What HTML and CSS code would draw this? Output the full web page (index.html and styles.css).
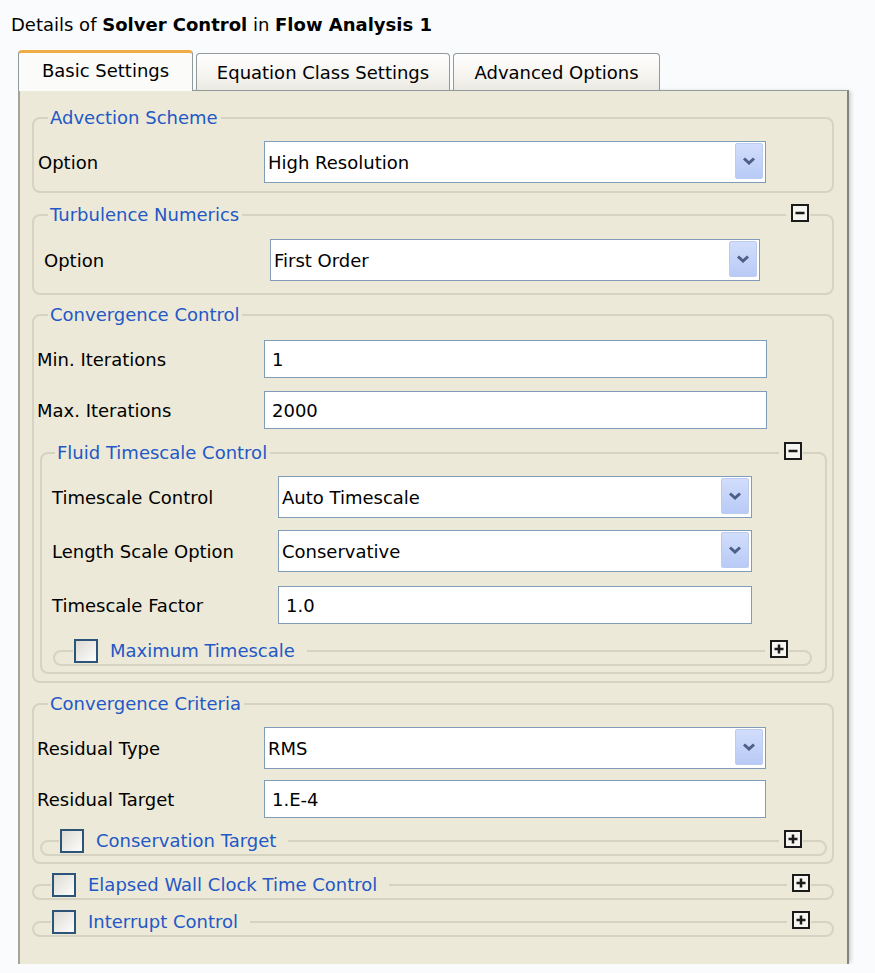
FILE: index.html
```html
<!DOCTYPE html>
<html>
<head>
<meta charset="utf-8">
<link rel="stylesheet" href="styles.css">
</head>
<body>
<div class="title">Details of <b>Solver Control</b> in <b>Flow Analysis 1</b></div>
<div class="tabs">
  <div class="tab active">Basic Settings</div>
  <div class="tab t2">Equation Class Settings</div>
  <div class="tab t3">Advanced Options</div>
</div>
<div class="panel">
  <section class="group g1">
    <div class="group-head"><span class="group-title">Advection Scheme</span></div>
    <div class="group-body">
      <div class="row"><span class="label">Option</span>
        <div class="combo"><span class="value">High Resolution</span><span class="drop"><svg width="14" height="10" viewBox="0 0 14 10"><path d="M2 2.5l5 4.5 5-4.5" fill="none" stroke="#4c5f86" stroke-width="3"/></svg></span></div>
      </div>
    </div>
  </section>

  <section class="group g2">
    <div class="group-head"><span class="group-title">Turbulence Numerics</span>
      <span class="toggle"><svg width="18" height="18" viewBox="0 0 18 18"><rect x="1" y="1" width="16" height="16" fill="#f6f5f0" stroke="#1b1b1b" stroke-width="2"/><path d="M4.5 9h9" stroke="#1b1b1b" stroke-width="2.5"/></svg></span>
    </div>
    <div class="group-body">
      <div class="row"><span class="label">Option</span>
        <div class="combo"><span class="value">First Order</span><span class="drop"><svg width="14" height="10" viewBox="0 0 14 10"><path d="M2 2.5l5 4.5 5-4.5" fill="none" stroke="#4c5f86" stroke-width="3"/></svg></span></div>
      </div>
    </div>
  </section>

  <section class="group g3">
    <div class="group-head"><span class="group-title">Convergence Control</span></div>
    <div class="group-body">
      <div class="row"><span class="label">Min. Iterations</span><div class="input">1</div></div>
      <div class="row"><span class="label">Max. Iterations</span><div class="input">2000</div></div>

      <section class="group fluid">
        <div class="group-head"><span class="group-title">Fluid Timescale Control</span>
          <span class="toggle"><svg width="18" height="18" viewBox="0 0 18 18"><rect x="1" y="1" width="16" height="16" fill="#f6f5f0" stroke="#1b1b1b" stroke-width="2"/><path d="M4.5 9h9" stroke="#1b1b1b" stroke-width="2.5"/></svg></span>
        </div>
        <div class="group-body">
          <div class="row"><span class="label">Timescale Control</span>
            <div class="combo"><span class="value">Auto Timescale</span><span class="drop"><svg width="14" height="10" viewBox="0 0 14 10"><path d="M2 2.5l5 4.5 5-4.5" fill="none" stroke="#4c5f86" stroke-width="3"/></svg></span></div>
          </div>
          <div class="row"><span class="label">Length Scale Option</span>
            <div class="combo"><span class="value">Conservative</span><span class="drop"><svg width="14" height="10" viewBox="0 0 14 10"><path d="M2 2.5l5 4.5 5-4.5" fill="none" stroke="#4c5f86" stroke-width="3"/></svg></span></div>
          </div>
          <div class="row gap14"><span class="label">Timescale Factor</span><div class="input">1.0</div></div>

          <section class="group collapsed maxts">
            <div class="group-head"><span class="group-title"><span class="check"></span>Maximum Timescale</span>
              <span class="toggle"><svg width="18" height="18" viewBox="0 0 18 18"><rect x="1" y="1" width="16" height="16" fill="#f6f5f0" stroke="#1b1b1b" stroke-width="2"/><path d="M4.5 9h9M9 4.5v9" stroke="#1b1b1b" stroke-width="2.5"/></svg></span>
            </div>
          </section>
        </div>
      </section>
    </div>
  </section>

  <section class="group g4">
    <div class="group-head"><span class="group-title">Convergence Criteria</span></div>
    <div class="group-body">
      <div class="row"><span class="label">Residual Type</span>
        <div class="combo"><span class="value">RMS</span><span class="drop"><svg width="14" height="10" viewBox="0 0 14 10"><path d="M2 2.5l5 4.5 5-4.5" fill="none" stroke="#4c5f86" stroke-width="3"/></svg></span></div>
      </div>
      <div class="row gap11"><span class="label">Residual Target</span><div class="input">1.E-4</div></div>

      <section class="group collapsed cons">
        <div class="group-head"><span class="group-title"><span class="check"></span>Conservation Target</span>
          <span class="toggle"><svg width="18" height="18" viewBox="0 0 18 18"><rect x="1" y="1" width="16" height="16" fill="#f6f5f0" stroke="#1b1b1b" stroke-width="2"/><path d="M4.5 9h9M9 4.5v9" stroke="#1b1b1b" stroke-width="2.5"/></svg></span>
        </div>
      </section>
    </div>
  </section>

  <section class="group collapsed g5">
    <div class="group-head"><span class="group-title"><span class="check"></span>Elapsed Wall Clock Time Control</span>
      <span class="toggle"><svg width="18" height="18" viewBox="0 0 18 18"><rect x="1" y="1" width="16" height="16" fill="#f6f5f0" stroke="#1b1b1b" stroke-width="2"/><path d="M4.5 9h9M9 4.5v9" stroke="#1b1b1b" stroke-width="2.5"/></svg></span>
    </div>
  </section>

  <section class="group collapsed g6">
    <div class="group-head"><span class="group-title"><span class="check"></span>Interrupt Control</span>
      <span class="toggle"><svg width="18" height="18" viewBox="0 0 18 18"><rect x="1" y="1" width="16" height="16" fill="#f6f5f0" stroke="#1b1b1b" stroke-width="2"/><path d="M4.5 9h9M9 4.5v9" stroke="#1b1b1b" stroke-width="2.5"/></svg></span>
    </div>
  </section>
</div>
</body>
</html>
```
FILE: styles.css
```css
* { box-sizing: border-box; }

body {
  margin: 0;
  background: #fafbfc;
  font-family: "DejaVu Sans", "Noto Sans", sans-serif;
  font-size: 18px;
  color: #000;
}

.title {
  margin: 14px 0 0 11px;
  line-height: 22px;
  white-space: nowrap;
}

.title b { font-weight: bold; }

.tabs {
  display: flex;
  align-items: flex-end;
  gap: 3px;
  height: 40px;
  margin: 14px 0 0 18px;
}

.tab {
  height: 37px;
  border: 1px solid #919b9c;
  border-bottom: none;
  border-radius: 4px 4px 0 0;
  background: linear-gradient(#ffffff, #f5f4ef 60%, #e9e8e1);
  display: flex;
  align-items: center;
  justify-content: center;
  padding-top: 2px;
  line-height: 22px;
  white-space: nowrap;
}

.tab.active {
  width: 175px;
  height: 41px;
  margin-bottom: -1px;
  border-top: 3px solid #f0ad45;
  background: #fbfbf9;
  padding-top: 0;
  padding-bottom: 3px;
  position: relative;
  z-index: 1;
}

.tab.t2 { width: 254px; }
.tab.t3 { width: 207px; }

.panel {
  width: 831px;
  margin-left: 18px;
  border-top: 1px solid #919b9c;
  border-left: 2px solid #a4a39c;
  border-right: 2px solid #85857f;
  background: #ece9d8;
  padding: 0 13px 27px 12px;
  box-shadow: 3px 0 4px -1px rgba(0, 0, 0, 0.18);
}

.group {
  border: 2px solid #d6d3c2;
  border-radius: 8px;
}

.group-head {
  display: flex;
  align-items: center;
  height: 22px;
  margin-top: -12px;
  padding: 0 22px 0 14px;
}

.group-title {
  display: flex;
  align-items: center;
  background: #ece9d8;
  color: #2358c6;
  line-height: 22px;
  padding: 0 3px 0 2px;
  white-space: nowrap;
}

.toggle {
  margin-left: auto;
  margin-bottom: 4px;
  padding: 0 1px 0 5px;
  background: #ece9d8;
  display: flex;
}

.toggle svg { display: block; }

.group-body { display: flex; flex-direction: column; }

.row {
  display: grid;
  grid-template-columns: 226px 1fr;
  align-items: center;
  line-height: 22px;
}

.row + .row { margin-top: 13px; }
.row.gap14 { margin-top: 14px; }
.row.gap11 { margin-top: 11px; }

.label { white-space: nowrap; padding-top: 2px; }

.combo {
  height: 42px;
  border: 1px solid #7f9db9;
  background: #fff;
  display: flex;
  align-items: center;
  padding: 1px 2px 0 3px;
}

.combo .value { flex: 1; }

.drop {
  width: 28px;
  height: 36px;
  margin-bottom: 3px;
  border: 1px solid #bccbef;
  border-radius: 2px;
  background: linear-gradient(#d1ddfb, #b8caf6);
  display: flex;
  align-items: center;
  justify-content: center;
}

.drop svg { display: block; }

.input {
  height: 38px;
  border: 1px solid #7f9db9;
  background: #fff;
  display: flex;
  align-items: center;
  padding: 1px 0 0 7px;
}

/* group specifics */
.g1 { margin-top: 26px; }
.g1 .group-body { padding: 12px 0 8px; }
.g1 .row { padding: 0 66px 0 4px; }

.g2 { margin-top: 21px; }
.g2 .group-body { padding: 13px 0 12px; }
.g2 .row { padding: 0 72px 0 10px; }

.g3 { margin-top: 19px; }
.g3 .group-body { padding: 14px 0 7px; }
.g3 > .group-body > .row { padding: 0 65px 0 3px; grid-template-columns: 227px 1fr; }

.fluid { margin: 23px 5px 0 6px; }
.fluid .group-head { padding-left: 13px; }
.fluid > .group-body { padding: 12px 0 6px; }
.fluid .row { padding: 0 73px 0 10px; }
.fluid .row + .row { margin-top: 12px; }
.fluid .row.gap14 { margin-top: 14px; }

.g4 { margin-top: 20px; }
.g4 > .group-body { padding: 12px 0 6px; }
.g4 .row { padding: 0 66px 0 3px; grid-template-columns: 227px 1fr; }

.collapsed {
  border-radius: 9px;
  padding-bottom: 1px;
}

.collapsed .group-head {
  height: 24px;
  margin-top: -13px;
  padding: 0 21px 0 17px;
}

.collapsed .group-title {
  gap: 12px;
  padding: 0 12px 0 1px;
}

.check {
  width: 24px;
  height: 24px;
  border: 2px solid #2c5378;
  background: linear-gradient(135deg, #dcdad2, #fdfdfc);
}

.maxts { margin: 26px 13px 0 11px; }
.maxts .group-head { padding-left: 18px; }

.cons { margin: 22px 5px 0 6px; }
.cons .group-head { padding-right: 22px; }

.g5 { margin-top: 20px; }
.g6 { margin-top: 21px; }
```
